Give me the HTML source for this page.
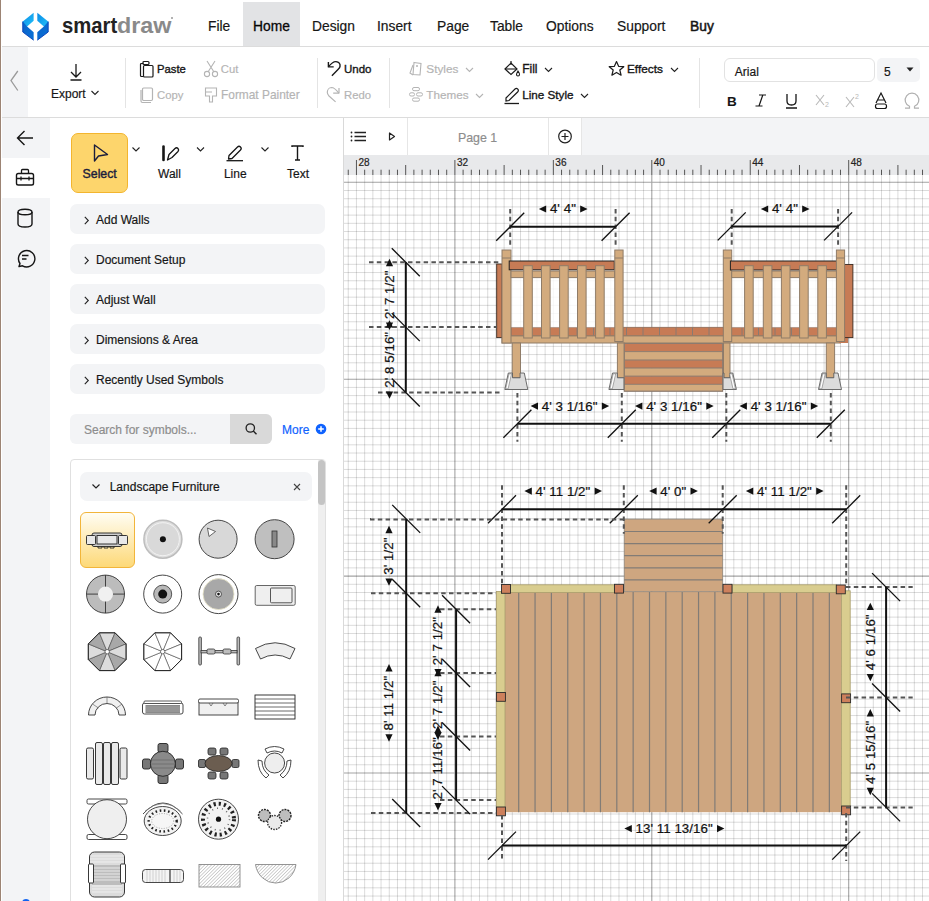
<!DOCTYPE html><html><head><meta charset="utf-8"><style>
*{box-sizing:border-box}
html,body{margin:0;padding:0}
body{width:929px;height:901px;overflow:hidden;position:relative;background:#fff;font-family:"Liberation Sans",sans-serif;color:#161616}
.a{position:absolute}
.t{position:absolute;white-space:nowrap;line-height:1}
svg{position:absolute;overflow:visible}
</style></head><body>
<div class="a" style="left:0px;top:0px;width:1px;height:901px;background:#9c8474"></div>
<div class="a" style="left:1.5px;top:46px;width:929px;height:1px;background:#dcdcdc"></div>
<svg style="left:0;top:0" width="60" height="46" viewBox="0 0 60 46">
<defs>
<linearGradient id="lgU" x1="0" y1="0" x2="1" y2="1"><stop offset="0" stop-color="#0a8ae6"/><stop offset="1" stop-color="#22c0f8"/></linearGradient>
<linearGradient id="lgD" x1="0" y1="0" x2="1" y2="1"><stop offset="0" stop-color="#0a62c8"/><stop offset="1" stop-color="#0a72d8"/></linearGradient>
</defs>
<polygon points="33.65,12.85 22.75,21.6 22.75,24.5 27.1,26.4 33.65,20.8" fill="url(#lgU)"/>
<polygon points="22.75,21.6 22.75,32 33.65,40.2 33.65,32.2 27.1,26.4" fill="url(#lgD)"/>
<polygon points="37.3,12.85 48.2,21.6 48.2,24.5 43.85,26.4 37.3,20.8" fill="url(#lgU)"/>
<polygon points="48.2,21.6 48.2,32 37.3,40.2 37.3,32.2 43.85,26.4" fill="url(#lgD)"/>
<polyline points="33.65,40.2 22.75,32 22.75,21.6" fill="none" stroke="#0740b8" stroke-width="0.9"/>
<polyline points="37.3,40.2 48.2,32 48.2,21.6" fill="none" stroke="#0740b8" stroke-width="0.9"/>
</svg>
<div class="a" style="left:170.5px;top:17px;width:2px;height:2px;background:#999;border-radius:1px"></div>
<div class="a" style="left:243px;top:2px;width:57px;height:44px;background:#e2e3e5"></div>
<div class="a" style="left:1.5px;top:47px;width:26px;height:70px;background:#f3f4f6"></div>
<svg style="left:0;top:47" width="30" height="70"><polyline points="17.8,24 11,33.5 17.8,43.5" fill="none" stroke="#9a9a9a" stroke-width="1.3"/></svg>
<div class="a" style="left:1.5px;top:117px;width:929px;height:1px;background:#dcdcdc"></div>
<svg style="left:66px;top:60px" width="20" height="22"><path d="M10 4 V17 M5 12 L10 17 L15 12 M4.5 20 H15.5" fill="none" stroke="#1a1a1a" stroke-width="1.3"/></svg>
<svg style="left:90px;top:89px" width="10" height="8"><polyline points="1.5,2 5,5.5 8.5,2" fill="none" stroke="#222" stroke-width="1.1"/></svg>
<div class="a" style="left:124.7px;top:57.5px;width:1px;height:50px;background:#e4e4e4"></div>
<div class="a" style="left:316.5px;top:57.5px;width:1px;height:50px;background:#e4e4e4"></div>
<div class="a" style="left:388.6px;top:57.5px;width:1px;height:50px;background:#e4e4e4"></div>
<div class="a" style="left:698.6px;top:57.5px;width:1px;height:50px;background:#e4e4e4"></div>
<svg style="left:138px;top:59px" width="18" height="20"><path d="M5.5 4.5 H3.5 Q2.5 4.5 2.5 5.5 V16.5 Q2.5 17.5 3.5 17.5 H5" fill="none" stroke="#1a1a1a" stroke-width="1.2"/><rect x="5.5" y="6.5" width="9.5" height="11.5" rx="1" fill="none" stroke="#1a1a1a" stroke-width="1.2"/><rect x="5" y="2.5" width="6" height="3" rx="1" fill="none" stroke="#1a1a1a" stroke-width="1.2"/></svg>
<svg style="left:203px;top:59px" width="16" height="20"><path d="M4 2 L11 13 M12 2 L5 13" stroke="#b4b4b4" stroke-width="1.1" fill="none"/><circle cx="4" cy="15" r="2.6" fill="none" stroke="#b4b4b4" stroke-width="1.1"/><circle cx="12" cy="15" r="2.6" fill="none" stroke="#b4b4b4" stroke-width="1.1"/></svg>
<svg style="left:138px;top:85px" width="18" height="20"><rect x="4.5" y="3" width="10" height="12.5" rx="1.2" fill="none" stroke="#b4b4b4" stroke-width="1.2"/><path d="M3 5 V16 Q3 17.5 4.5 17.5 H13" fill="none" stroke="#b4b4b4" stroke-width="1.2"/></svg>
<svg style="left:203px;top:85px" width="16" height="20"><path d="M2.5 3 H13.5 V11 H9.5 V17 H6.5 V11 H2.5 Z M2.5 7 H9" fill="none" stroke="#b4b4b4" stroke-width="1.1"/></svg>
<svg style="left:326px;top:59px" width="18" height="20"><path d="M2.4 2.9 V7.9 H7.7" fill="none" stroke="#1a1a1a" stroke-width="1.4" stroke-linejoin="round"/><path d="M2.4 7.9 C5 4.5 8 2.5 10 2.6 C13 2.8 14.5 5 14 7.5 C13.7 9 12.5 10 12 10.5 L5.9 16.7" fill="none" stroke="#1a1a1a" stroke-width="1.4"/></svg>
<svg style="left:326px;top:85px" width="18" height="20"><path d="M13 3 V8.1 H7.2" fill="none" stroke="#b4b4b4" stroke-width="1.2" stroke-linejoin="round"/><path d="M12.8 8.1 C10 4.5 7.5 2.5 5.6 2.5 C3 2.6 1.3 5 1.3 7.3 C1.3 9 2 10 3 11 L9.6 16.9" fill="none" stroke="#b4b4b4" stroke-width="1.2"/></svg>
<svg style="left:408px;top:59px" width="16" height="20"><path d="M6 3.5 L13 4.5 L12 16 L5 15.5 Z" fill="none" stroke="#b4b4b4" stroke-width="1.1"/><path d="M5 6 L2 14 L5 16" fill="none" stroke="#b4b4b4" stroke-width="1.1"/><circle cx="9" cy="7" r="1" fill="#b4b4b4"/></svg>
<svg style="left:465px;top:66px" width="10" height="8"><polyline points="1,2 4.5,5.5 8,2" fill="none" stroke="#b4b4b4" stroke-width="1.1"/></svg>
<svg style="left:408px;top:85px" width="16" height="20"><rect x="4.5" y="2.5" width="7" height="3.2" rx="1.5" fill="none" stroke="#b4b4b4" stroke-width="1"/><rect x="1.5" y="7.8" width="5" height="3.2" rx="1.5" fill="none" stroke="#b4b4b4" stroke-width="1"/><rect x="8.5" y="7.8" width="6" height="3.2" rx="1.5" fill="none" stroke="#b4b4b4" stroke-width="1"/><rect x="4.5" y="13" width="7" height="3.2" rx="1.5" fill="none" stroke="#b4b4b4" stroke-width="1"/></svg>
<svg style="left:475px;top:92px" width="10" height="8"><polyline points="1,2 4.5,5.5 8,2" fill="none" stroke="#b4b4b4" stroke-width="1.1"/></svg>
<svg style="left:503px;top:59px" width="18" height="20"><path d="M2 10 L8 4 L14 10 L8 15.5 Z" fill="none" stroke="#1a1a1a" stroke-width="1.2"/><path d="M8 2 V6" stroke="#1a1a1a" stroke-width="1.2"/><path d="M2.5 10 H14" stroke="#1a1a1a" stroke-width="1.1"/><path d="M15 12 Q16.8 14.5 16.5 15.5 A1.5 1.5 0 0 1 13.5 15.5 Q13.5 14.5 15 12Z" fill="none" stroke="#1a1a1a" stroke-width="1.1"/></svg>
<svg style="left:544px;top:66px" width="10" height="8"><polyline points="1,2 4.5,5.5 8,2" fill="none" stroke="#222" stroke-width="1.1"/></svg>
<svg style="left:503px;top:85px" width="18" height="20"><path d="M3 13 L12 4 Q13.5 2.8 14.8 4.2 Q16 5.5 14.6 7 L6 15.5 L3 16 Z" fill="none" stroke="#1a1a1a" stroke-width="1.2"/><path d="M1.5 18.5 H16" stroke="#1a1a1a" stroke-width="1.3"/></svg>
<svg style="left:580px;top:92px" width="10" height="8"><polyline points="1,2 4.5,5.5 8,2" fill="none" stroke="#222" stroke-width="1.1"/></svg>
<svg style="left:608px;top:59px" width="18" height="20"><path d="M8.5 2.5 L10.6 7.3 L15.8 7.7 L11.8 11 L13.1 16.2 L8.5 13.4 L3.9 16.2 L5.2 11 L1.2 7.7 L6.4 7.3 Z" fill="none" stroke="#1a1a1a" stroke-width="1.2" stroke-linejoin="round"/></svg>
<svg style="left:670px;top:66px" width="10" height="8"><polyline points="1,2 4.5,5.5 8,2" fill="none" stroke="#222" stroke-width="1.1"/></svg>
<div class="a" style="left:723.7px;top:58.3px;width:151px;height:24.2px;border:1px solid #e2e2e2;border-radius:6px;background:#fff"></div>
<div class="a" style="left:877.4px;top:58.3px;width:42.4px;height:24.2px;background:#f3f4f6;border-radius:5px"></div>
<svg style="left:904px;top:66px" width="12" height="8"><polygon points="2.5,1.5 9.5,1.5 6,5.5" fill="#222"/></svg>
<svg style="left:720px;top:90px" width="209" height="22">
<text x="7" y="16" font-family="Liberation Sans" font-weight="bold" font-size="13.5" fill="#161616">B</text>
<path d="M39 5 H46 M35.5 16 H42.5 M42.8 5 L39 16" stroke="#161616" stroke-width="1.2" fill="none"/>
<path d="M67 4 V11 Q67 15 71.5 15 Q76 15 76 11 V4 M66 18 H77" stroke="#161616" stroke-width="1.3" fill="none"/>
<path d="M96 5 L104 15 M104 5 L96 15" stroke="#b8b8b8" stroke-width="1.1" fill="none"/><text x="105" y="17" font-family="Liberation Sans" font-size="7" fill="#b8b8b8">2</text>
<path d="M126 7 L134 17 M134 7 L126 17" stroke="#b8b8b8" stroke-width="1.1" fill="none"/><text x="135" y="9" font-family="Liberation Sans" font-size="7" fill="#b8b8b8">2</text>
<path d="M156 13 L161 3 L166 13 M158 10 H164" stroke="#161616" stroke-width="1.2" fill="none"/><rect x="155.5" y="14" width="11" height="4.5" rx="2" fill="none" stroke="#161616" stroke-width="1.2"/>
<path d="M185 18.2 H189.5 V16.3 A6.8 6.8 0 1 1 194.5 16.3 V18.2 H199" stroke="#b0b0b0" stroke-width="1.2" fill="none"/>
</svg>
<div class="a" style="left:1.5px;top:118px;width:48.5px;height:783px;background:#f3f4f6"></div>
<div class="a" style="left:1.5px;top:158px;width:48.5px;height:40px;background:#fff"></div>
<svg style="left:0;top:118px" width="50" height="160">
<path d="M33 20 H17.5 M24.5 13 L17.5 20 L24.5 27" fill="none" stroke="#161616" stroke-width="1.4"/>
<rect x="16.5" y="55.5" width="17" height="11.5" rx="1.8" fill="none" stroke="#161616" stroke-width="1.4"/>
<path d="M21.5 55.5 V52.5 Q21.5 51.5 22.5 51.5 H27.5 Q28.5 51.5 28.5 52.5 V55.5 M16.5 60.5 H33.5 M21 58.5 V62.5 M29 58.5 V62.5" fill="none" stroke="#161616" stroke-width="1.3"/>
<ellipse cx="25" cy="94" rx="7" ry="2.8" fill="none" stroke="#161616" stroke-width="1.4"/>
<path d="M18 94 V106 Q18 109 25 109 Q32 109 32 106 V94" fill="none" stroke="#161616" stroke-width="1.4"/>
<path d="M19 148.5 L20 145.5 A8.2 8.2 0 1 1 22.5 147.8 Z" fill="none" stroke="#161616" stroke-width="1.4" stroke-linejoin="round"/>
<path d="M22 137.5 H28.5 M22 141 H26.5" stroke="#161616" stroke-width="1.4"/>
</svg>
<div class="a" style="left:343px;top:118px;width:1px;height:783px;background:#d9d9d9"></div>
<div class="a" style="left:70.5px;top:133px;width:57.3px;height:59.6px;background:#fdd56c;border:1px solid #f3b52e;border-radius:7px"></div>
<svg style="left:60px;top:120px" width="280" height="50">
<path d="M34.5 25 L34.5 41 L38.5 36 L47.5 34.5 Z" fill="none" stroke="#1b1d3c" stroke-width="1.4" stroke-linejoin="round"/>
<polyline points="72.5,27.5 76,31 79.5,27.5" fill="none" stroke="#222" stroke-width="1.1"/>
<path d="M103.5 26.5 V40" stroke="#161616" stroke-width="2.6" stroke-linecap="round"/>
<path d="M107.5 40 L109 34.5 L115 28.5 Q116.6 27 118 28.5 Q119.3 30 118 31.5 L112 37.5 Z" fill="none" stroke="#161616" stroke-width="1.3" stroke-linejoin="round"/>
<polyline points="137,27.5 140.5,31 144,27.5" fill="none" stroke="#222" stroke-width="1.1"/>
<path d="M169 35.5 L177.5 27 Q179 25.5 180.5 27 Q182 28.5 180.5 30 L172 38.5 L168.5 39 Z" fill="none" stroke="#161616" stroke-width="1.3" stroke-linejoin="round"/>
<path d="M166.5 40.7 H183" stroke="#161616" stroke-width="1.3"/>
<polyline points="201.5,27.5 205,31 208.5,27.5" fill="none" stroke="#222" stroke-width="1.1"/>
<path d="M232 27 V26 H243 V27 M237.5 26 V40 M235 40 H240" stroke="#161616" stroke-width="1.4" fill="none"/>
</svg>
<div class="a" style="left:70px;top:204px;width:255.2px;height:29.6px;background:#f3f4f6;border-radius:7px"></div>
<svg style="left:80px;top:204px" width="12" height="30"><polyline points="4.8,12.8 8.3,16.5 4.8,20.2" fill="none" stroke="#222" stroke-width="1.1"/></svg>
<div class="a" style="left:70px;top:244px;width:255.2px;height:29.6px;background:#f3f4f6;border-radius:7px"></div>
<svg style="left:80px;top:244px" width="12" height="30"><polyline points="4.8,12.8 8.3,16.5 4.8,20.2" fill="none" stroke="#222" stroke-width="1.1"/></svg>
<div class="a" style="left:70px;top:284px;width:255.2px;height:29.6px;background:#f3f4f6;border-radius:7px"></div>
<svg style="left:80px;top:284px" width="12" height="30"><polyline points="4.8,12.8 8.3,16.5 4.8,20.2" fill="none" stroke="#222" stroke-width="1.1"/></svg>
<div class="a" style="left:70px;top:324px;width:255.2px;height:29.6px;background:#f3f4f6;border-radius:7px"></div>
<svg style="left:80px;top:324px" width="12" height="30"><polyline points="4.8,12.8 8.3,16.5 4.8,20.2" fill="none" stroke="#222" stroke-width="1.1"/></svg>
<div class="a" style="left:70px;top:364px;width:255.2px;height:29.6px;background:#f3f4f6;border-radius:7px"></div>
<svg style="left:80px;top:364px" width="12" height="30"><polyline points="4.8,12.8 8.3,16.5 4.8,20.2" fill="none" stroke="#222" stroke-width="1.1"/></svg>
<div class="a" style="left:70px;top:414.2px;width:202px;height:29.5px;background:#f3f4f6;border-radius:6px"></div>
<div class="a" style="left:230.3px;top:414.2px;width:41.7px;height:29.5px;background:#d9d9d9;border-radius:0 6px 6px 0"></div>
<svg style="left:241px;top:419px" width="20" height="20"><circle cx="9.3" cy="9" r="4.2" fill="none" stroke="#222" stroke-width="1.3"/><path d="M12.3 12 L15.5 15.2" stroke="#222" stroke-width="1.4"/></svg>
<svg style="left:313px;top:421px" width="16" height="16"><circle cx="8" cy="8" r="5.3" fill="#0f62fe"/><path d="M8 5.2 V10.8 M5.2 8 H10.8" stroke="#fff" stroke-width="1.5"/></svg>
<div class="a" style="left:70px;top:459.4px;width:256px;height:460px;border:1px solid #e0e0e0;border-radius:4px"></div>
<div class="a" style="left:317.7px;top:460px;width:7.2px;height:441px;background:#efefef"></div>
<div class="a" style="left:317.7px;top:460px;width:7.2px;height:45px;background:#c4c4c4;border-radius:4px"></div>
<div class="a" style="left:80px;top:472.2px;width:232.2px;height:29.3px;background:#f3f4f6;border-radius:7px"></div>
<svg style="left:88px;top:478px" width="16" height="16"><polyline points="4.5,6.5 8,10 11.5,6.5" fill="none" stroke="#222" stroke-width="1.2"/></svg>
<svg style="left:291px;top:481px" width="12" height="12"><path d="M3 3 L9 9 M9 3 L3 9" stroke="#444" stroke-width="1.1"/></svg>
<div class="a" style="left:344px;top:118px;width:585px;height:37px;background:#f3f4f6"></div>
<div class="a" style="left:344px;top:118px;width:236.5px;height:37px;background:#fff"></div>
<div class="a" style="left:407px;top:118px;width:1px;height:37px;background:#e6e6e6"></div>
<div class="a" style="left:548.3px;top:118px;width:1px;height:37px;background:#e6e6e6"></div>
<div class="a" style="left:580.5px;top:118px;width:1px;height:37px;background:#e6e6e6"></div>
<svg style="left:344px;top:118px" width="240" height="37">
<path d="M10.5 14.5 H22 M10.5 18.5 H22 M10.5 22.5 H22" stroke="#222" stroke-width="1.3"/>
<circle cx="7.5" cy="14.5" r="0.9" fill="#222"/><circle cx="7.5" cy="18.5" r="0.9" fill="#222"/><circle cx="7.5" cy="22.5" r="0.9" fill="#222"/>
<path d="M45.5 15 L45.5 22 L50.5 18.5 Z" fill="none" stroke="#222" stroke-width="1.2" stroke-linejoin="round"/>
<circle cx="221" cy="18.5" r="6.3" fill="none" stroke="#222" stroke-width="1.2"/>
<path d="M221 15 V22 M217.5 18.5 H224.5" stroke="#222" stroke-width="1.2"/>
</svg>
<svg style="left:344px;top:155px" width="585" height="746" viewBox="344 155 585 746"><rect x="344" y="155" width="585" height="20" fill="#e8e9eb"/><rect x="344" y="175" width="585" height="726" fill="#fff"/><path d="M348.25 175V901 M356.45 175V901 M364.66 175V901 M372.86 175V901 M381.06 175V901 M389.27 175V901 M397.47 175V901 M405.68 175V901 M413.88 175V901 M422.08 175V901 M430.29 175V901 M438.49 175V901 M446.70 175V901 M463.10 175V901 M471.31 175V901 M479.51 175V901 M487.72 175V901 M495.92 175V901 M504.12 175V901 M512.33 175V901 M520.53 175V901 M528.74 175V901 M536.94 175V901 M545.14 175V901 M553.35 175V901 M561.55 175V901 M569.76 175V901 M577.96 175V901 M586.16 175V901 M594.37 175V901 M602.57 175V901 M610.78 175V901 M618.98 175V901 M627.18 175V901 M635.39 175V901 M643.59 175V901 M660.00 175V901 M668.20 175V901 M676.41 175V901 M684.61 175V901 M692.82 175V901 M701.02 175V901 M709.22 175V901 M717.43 175V901 M725.63 175V901 M733.84 175V901 M742.04 175V901 M750.24 175V901 M758.45 175V901 M766.65 175V901 M774.86 175V901 M783.06 175V901 M791.26 175V901 M799.47 175V901 M807.67 175V901 M815.88 175V901 M824.08 175V901 M832.28 175V901 M840.49 175V901 M856.90 175V901 M865.10 175V901 M873.30 175V901 M881.51 175V901 M889.71 175V901 M897.92 175V901 M906.12 175V901 M914.32 175V901 M922.53 175V901 M344 190.50H929 M344 198.71H929 M344 206.91H929 M344 215.12H929 M344 223.32H929 M344 231.52H929 M344 239.73H929 M344 247.93H929 M344 256.14H929 M344 264.34H929 M344 272.54H929 M344 280.75H929 M344 288.95H929 M344 297.16H929 M344 305.36H929 M344 313.56H929 M344 321.77H929 M344 329.97H929 M344 338.18H929 M344 346.38H929 M344 354.58H929 M344 362.79H929 M344 370.99H929 M344 387.40H929 M344 395.60H929 M344 403.81H929 M344 412.01H929 M344 420.22H929 M344 428.42H929 M344 436.62H929 M344 444.83H929 M344 453.03H929 M344 461.24H929 M344 469.44H929 M344 477.64H929 M344 485.85H929 M344 494.05H929 M344 502.26H929 M344 510.46H929 M344 518.66H929 M344 526.87H929 M344 535.07H929 M344 543.28H929 M344 551.48H929 M344 559.68H929 M344 567.89H929 M344 584.30H929 M344 592.50H929 M344 600.70H929 M344 608.91H929 M344 617.11H929 M344 625.32H929 M344 633.52H929 M344 641.72H929 M344 649.93H929 M344 658.13H929 M344 666.34H929 M344 674.54H929 M344 682.74H929 M344 690.95H929 M344 699.15H929 M344 707.36H929 M344 715.56H929 M344 723.76H929 M344 731.97H929 M344 740.17H929 M344 748.38H929 M344 756.58H929 M344 764.78H929 M344 781.19H929 M344 789.40H929 M344 797.60H929 M344 805.80H929 M344 814.01H929 M344 822.21H929 M344 830.42H929 M344 838.62H929 M344 846.82H929 M344 855.03H929 M344 863.23H929 M344 871.44H929 M344 879.64H929 M344 887.84H929 M344 896.05H929" stroke="rgba(0,0,0,0.14)" stroke-width="1" fill="none"/><path d="M454.90 175V901 M651.80 175V901 M848.69 175V901 M344 182.30H929 M344 379.20H929 M344 576.09H929 M344 772.99H929" stroke="rgba(0,0,0,0.36)" stroke-width="1.1" fill="none"/><path d="M348.25 169.7V175 M356.45 160V175 M364.66 169.7V175 M372.86 169.7V175 M381.06 169.7V175 M389.27 169.7V175 M397.47 169.7V175 M405.68 165V175 M413.88 169.7V175 M422.08 169.7V175 M430.29 169.7V175 M438.49 169.7V175 M446.70 169.7V175 M454.90 160V175 M463.10 169.7V175 M471.31 169.7V175 M479.51 169.7V175 M487.72 169.7V175 M495.92 169.7V175 M504.12 165V175 M512.33 169.7V175 M520.53 169.7V175 M528.74 169.7V175 M536.94 169.7V175 M545.14 169.7V175 M553.35 160V175 M561.55 169.7V175 M569.76 169.7V175 M577.96 169.7V175 M586.16 169.7V175 M594.37 169.7V175 M602.57 165V175 M610.78 169.7V175 M618.98 169.7V175 M627.18 169.7V175 M635.39 169.7V175 M643.59 169.7V175 M651.80 160V175 M660.00 169.7V175 M668.20 169.7V175 M676.41 169.7V175 M684.61 169.7V175 M692.82 169.7V175 M701.02 165V175 M709.22 169.7V175 M717.43 169.7V175 M725.63 169.7V175 M733.84 169.7V175 M742.04 169.7V175 M750.24 160V175 M758.45 169.7V175 M766.65 169.7V175 M774.86 169.7V175 M783.06 169.7V175 M791.26 169.7V175 M799.47 165V175 M807.67 169.7V175 M815.88 169.7V175 M824.08 169.7V175 M832.28 169.7V175 M840.49 169.7V175 M848.69 160V175 M856.90 169.7V175 M865.10 169.7V175 M873.30 169.7V175 M881.51 169.7V175 M889.71 169.7V175 M897.92 165V175 M906.12 169.7V175 M914.32 169.7V175 M922.53 169.7V175" stroke="#555" stroke-width="1" fill="none"/><text x="358.45" y="165.8" font-family="Liberation Sans" font-size="10" fill="#222" stroke="#222" stroke-width="0.2">28</text><text x="456.90" y="165.8" font-family="Liberation Sans" font-size="10" fill="#222" stroke="#222" stroke-width="0.2">32</text><text x="555.35" y="165.8" font-family="Liberation Sans" font-size="10" fill="#222" stroke="#222" stroke-width="0.2">36</text><text x="653.80" y="165.8" font-family="Liberation Sans" font-size="10" fill="#222" stroke="#222" stroke-width="0.2">40</text><text x="752.24" y="165.8" font-family="Liberation Sans" font-size="10" fill="#222" stroke="#222" stroke-width="0.2">44</text><text x="850.69" y="165.8" font-family="Liberation Sans" font-size="10" fill="#222" stroke="#222" stroke-width="0.2">48</text><rect x="511.00" y="327.30" width="329.50" height="8.60" fill="#c77b55" stroke="#8a6a58" stroke-width="0.8"/><path d="M527.5 327.5V335.7 M544.0 327.5V335.7 M560.5 327.5V335.7 M577.0 327.5V335.7 M593.5 327.5V335.7 M610.0 327.5V335.7 M626.5 327.5V335.7 M643.0 327.5V335.7 M659.5 327.5V335.7 M676.0 327.5V335.7 M692.5 327.5V335.7 M709.0 327.5V335.7 M725.5 327.5V335.7 M742.0 327.5V335.7 M758.5 327.5V335.7 M775.0 327.5V335.7 M791.5 327.5V335.7 M808.0 327.5V335.7 M824.5 327.5V335.7" stroke="#8a7a70" stroke-width="1"/><rect x="502.00" y="335.90" width="338.50" height="7.10" fill="#d3ab7e" stroke="#8f7c68" stroke-width="1"/><rect x="839.00" y="337.00" width="9.00" height="6.00" fill="#c77b55" stroke="none" stroke-width="1"/><rect x="624.20" y="343.60" width="98.50" height="8.10" fill="#c77b55" stroke="#8a7a6e" stroke-width="0.8"/><rect x="624.20" y="351.70" width="98.50" height="8.40" fill="#d3ab7e" stroke="#8a7a6e" stroke-width="0.8"/><rect x="624.20" y="360.10" width="98.50" height="8.00" fill="#c77b55" stroke="#8a7a6e" stroke-width="0.8"/><rect x="624.20" y="368.10" width="98.50" height="8.10" fill="#d3ab7e" stroke="#8a7a6e" stroke-width="0.8"/><rect x="624.20" y="376.20" width="98.50" height="8.10" fill="#c77b55" stroke="#8a7a6e" stroke-width="0.8"/><rect x="624.20" y="384.30" width="98.50" height="6.90" fill="#d3ab7e" stroke="#8a7a6e" stroke-width="0.8"/><rect x="511.00" y="270.00" width="103.80" height="57.30" fill="rgba(255,255,255,0.8)" stroke="none" stroke-width="1"/><rect x="731.70" y="270.00" width="104.70" height="57.30" fill="rgba(255,255,255,0.8)" stroke="none" stroke-width="1"/><rect x="496.70" y="264.00" width="5.40" height="73.60" fill="#c77b55" stroke="#3a2a20" stroke-width="0.9"/><rect x="502.00" y="250.00" width="9.00" height="93.00" fill="#d3ab7e" stroke="#8f7c68" stroke-width="1"/><path d="M502 258H511" stroke="#8f7c68" stroke-width="1"/><rect x="509.20" y="261.00" width="105.10" height="8.80" fill="#c77b55" stroke="#222" stroke-width="1"/><rect x="511.00" y="271.00" width="103.50" height="6.60" fill="#d3ab7e" stroke="#8f7c68" stroke-width="1"/><rect x="523.70" y="265.70" width="8.60" height="72.30" fill="#d3ab7e" stroke="#8f7c68" stroke-width="1"/><rect x="541.50" y="265.70" width="8.60" height="72.30" fill="#d3ab7e" stroke="#8f7c68" stroke-width="1"/><rect x="559.60" y="265.70" width="8.60" height="72.30" fill="#d3ab7e" stroke="#8f7c68" stroke-width="1"/><rect x="577.50" y="265.70" width="8.60" height="72.30" fill="#d3ab7e" stroke="#8f7c68" stroke-width="1"/><rect x="595.60" y="265.70" width="8.60" height="72.30" fill="#d3ab7e" stroke="#8f7c68" stroke-width="1"/><rect x="614.80" y="250.00" width="8.30" height="91.50" fill="#d3ab7e" stroke="#8f7c68" stroke-width="1"/><path d="M614.8 258H623.1" stroke="#8f7c68" stroke-width="1"/><rect x="843.50" y="264.50" width="9.40" height="73.10" fill="#c77b55" stroke="#3a2a20" stroke-width="0.9"/><rect x="723.30" y="250.00" width="8.40" height="91.50" fill="#d3ab7e" stroke="#8f7c68" stroke-width="1"/><path d="M723.3 258H731.7" stroke="#8f7c68" stroke-width="1"/><rect x="730.40" y="261.00" width="107.10" height="9.00" fill="#c77b55" stroke="#222" stroke-width="1"/><rect x="731.70" y="271.00" width="105.30" height="6.60" fill="#d3ab7e" stroke="#8f7c68" stroke-width="1"/><rect x="744.60" y="265.70" width="8.60" height="72.30" fill="#d3ab7e" stroke="#8f7c68" stroke-width="1"/><rect x="763.30" y="265.70" width="8.60" height="72.30" fill="#d3ab7e" stroke="#8f7c68" stroke-width="1"/><rect x="781.40" y="265.70" width="8.60" height="72.30" fill="#d3ab7e" stroke="#8f7c68" stroke-width="1"/><rect x="799.60" y="265.70" width="8.60" height="72.30" fill="#d3ab7e" stroke="#8f7c68" stroke-width="1"/><rect x="817.80" y="265.70" width="8.60" height="72.30" fill="#d3ab7e" stroke="#8f7c68" stroke-width="1"/><rect x="836.40" y="250.00" width="8.20" height="91.50" fill="#d3ab7e" stroke="#8f7c68" stroke-width="1"/><path d="M836.4 258H844.6" stroke="#8f7c68" stroke-width="1"/><rect x="512.20" y="343.00" width="8.30" height="34.50" fill="#d3ab7e" stroke="#8f7c68" stroke-width="1"/><rect x="617.40" y="343.00" width="6.80" height="34.50" fill="#d3ab7e" stroke="#8f7c68" stroke-width="1"/><rect x="723.50" y="343.00" width="6.50" height="34.50" fill="#d3ab7e" stroke="#8f7c68" stroke-width="1"/><rect x="826.30" y="343.00" width="8.30" height="34.50" fill="#d3ab7e" stroke="#8f7c68" stroke-width="1"/><path d="M508.3 373 H512.5 V377.8 H520.1 V373 H524.3 L527.8 389.5 H504.8 Z" fill="#dcdcdc" stroke="#5e5e5e" stroke-width="0.9"/><path d="M509.0 373.8 H511.5 L508.1 388.8 H505.7 Z" fill="#fff" stroke="#777" stroke-width="0.6"/><path d="M822.0 373 H826.2 V377.8 H833.8 V373 H838.0 L841.5 389.5 H818.5 Z" fill="#dcdcdc" stroke="#5e5e5e" stroke-width="0.9"/><path d="M822.7 373.8 H825.2 L821.8 388.8 H819.4 Z" fill="#fff" stroke="#777" stroke-width="0.6"/><path d="M612.5 373 H617.4 V377.8 H624 V389.5 H608.9 Z" fill="#dcdcdc" stroke="#5e5e5e" stroke-width="0.9"/><path d="M613.2 373.8 H615.7 L612.3 388.8 H609.9 Z" fill="#fff" stroke="#777" stroke-width="0.6"/><path d="M723 373 V389.5 H736.4 L732.8 373 H730 V377.8 H724 V373 Z" fill="#dcdcdc" stroke="#5e5e5e" stroke-width="0.9"/><path d="M729.6 373.8 H732.1 L735.4 388.8 H733 Z" fill="#fff" stroke="#777" stroke-width="0.6"/><rect x="624.20" y="343.60" width="98.50" height="47.60" fill="none" stroke="#8a7a6e" stroke-width="0.8"/><rect x="505.00" y="592.00" width="336.60" height="220.20" fill="#cea680" stroke="none" stroke-width="1"/><path d="M518.70 592V812.2 M535.05 592V812.2 M551.40 592V812.2 M567.75 592V812.2 M584.10 592V812.2 M600.45 592V812.2 M616.80 592V812.2 M633.15 592V812.2 M649.50 592V812.2 M665.85 592V812.2 M682.20 592V812.2 M698.55 592V812.2 M714.90 592V812.2 M731.25 592V812.2 M747.60 592V812.2 M763.95 592V812.2 M780.30 592V812.2 M796.65 592V812.2 M813.00 592V812.2 M829.35 592V812.2" stroke="#827c76" stroke-width="1.2"/><rect x="624.20" y="519.10" width="98.50" height="72.60" fill="#cea680" stroke="#8c847a" stroke-width="0.8"/><path d="M624.2 531.5H722.7 M624.2 543.6H722.7 M624.2 555.7H722.7 M624.2 567.8H722.7 M624.2 579.9H722.7" stroke="#827c76" stroke-width="1.2"/><rect x="496.40" y="591.40" width="8.60" height="220.60" fill="#d9cd8f" stroke="#a99d6c" stroke-width="0.8"/><rect x="505.00" y="584.80" width="109.30" height="7.80" fill="#d9cd8f" stroke="#a99d6c" stroke-width="0.8"/><rect x="732.20" y="584.80" width="104.10" height="7.80" fill="#d9cd8f" stroke="#a99d6c" stroke-width="0.8"/><rect x="841.60" y="590.80" width="8.60" height="217.20" fill="#d9cd8f" stroke="#a99d6c" stroke-width="0.8"/><rect x="501.50" y="584.50" width="9.00" height="8.80" fill="#cd805c" stroke="#2a2a2a" stroke-width="0.9"/><rect x="614.50" y="584.30" width="9.00" height="8.80" fill="#cd805c" stroke="#2a2a2a" stroke-width="0.9"/><rect x="723.00" y="584.30" width="9.00" height="8.80" fill="#cd805c" stroke="#2a2a2a" stroke-width="0.9"/><rect x="836.30" y="585.00" width="9.00" height="8.80" fill="#cd805c" stroke="#2a2a2a" stroke-width="0.9"/><rect x="841.60" y="693.90" width="9.00" height="8.80" fill="#cd805c" stroke="#2a2a2a" stroke-width="0.9"/><rect x="496.40" y="692.50" width="9.00" height="8.80" fill="#cd805c" stroke="#2a2a2a" stroke-width="0.9"/><rect x="496.40" y="807.00" width="9.00" height="8.80" fill="#cd805c" stroke="#2a2a2a" stroke-width="0.9"/><rect x="841.60" y="806.00" width="9.00" height="8.80" fill="#cd805c" stroke="#2a2a2a" stroke-width="0.9"/><path d="M510.2 209.0V245.7" stroke="#555" stroke-width="2" stroke-dasharray="4.5 3.3"/><path d="M615.6 209.0V245.7" stroke="#555" stroke-width="2" stroke-dasharray="4.5 3.3"/><path d="M510.2 226.8H615.6" stroke="#111" stroke-width="2"/><path d="M496.2 240.8L524.2 212.8" stroke="#111" stroke-width="1.3"/><path d="M601.6 240.8L629.6 212.8" stroke="#111" stroke-width="1.3"/><text transform="translate(549.92 213.40) scale(1.09 1)" font-family="Liberation Sans" font-size="12.2" letter-spacing="0.05" fill="#111" stroke="#111" stroke-width="0.2">4' 4&quot;</text><path d="M538.8 209.0L546.2 205.4V212.6Z" fill="#111"/><path d="M587.6 209.0L580.2 205.4V212.6Z" fill="#111"/><path d="M731.7 209.0V245.7" stroke="#555" stroke-width="2" stroke-dasharray="4.5 3.3"/><path d="M838.1 209.0V245.7" stroke="#555" stroke-width="2" stroke-dasharray="4.5 3.3"/><path d="M731.7 226.4H838.1" stroke="#111" stroke-width="2"/><path d="M717.7 240.4L745.7 212.4" stroke="#111" stroke-width="1.3"/><path d="M824.1 240.4L852.1 212.4" stroke="#111" stroke-width="1.3"/><text transform="translate(771.92 213.40) scale(1.09 1)" font-family="Liberation Sans" font-size="12.2" letter-spacing="0.05" fill="#111" stroke="#111" stroke-width="0.2">4' 4&quot;</text><path d="M760.8 209.0L768.2 205.4V212.6Z" fill="#111"/><path d="M809.6 209.0L802.2 205.4V212.6Z" fill="#111"/><path d="M369.0 262.3H501.6" stroke="#555" stroke-width="2" stroke-dasharray="4.5 3.3"/><path d="M369.0 327.1H497.0" stroke="#555" stroke-width="2" stroke-dasharray="4.5 3.3"/><path d="M378.0 392.5H501.6" stroke="#555" stroke-width="2" stroke-dasharray="4.5 3.3"/><path d="M405.8 262.3V392.5" stroke="#111" stroke-width="2"/><path d="M391.8 248.3L419.8 276.3" stroke="#111" stroke-width="1.3"/><path d="M391.8 313.1L419.8 341.1" stroke="#111" stroke-width="1.3"/><path d="M391.8 378.5L419.8 406.5" stroke="#111" stroke-width="1.3"/><text transform="translate(393.90 318.88) rotate(-90) scale(1.09 1)" font-family="Liberation Sans" font-size="12.2" letter-spacing="0.05" fill="#111" stroke="#111" stroke-width="0.2">2' 7 1/2&quot;</text><path d="M389.5 258.8L385.9 266.2H393.1Z" fill="#111"/><path d="M389.5 330.0L385.9 322.6H393.1Z" fill="#111"/><text transform="translate(393.90 387.70) rotate(-90) scale(1.09 1)" font-family="Liberation Sans" font-size="12.2" letter-spacing="0.05" fill="#111" stroke="#111" stroke-width="0.2">2' 8 5/16&quot;</text><path d="M389.5 320.2L385.9 327.6H393.1Z" fill="#111"/><path d="M389.5 398.8L385.9 391.4H393.1Z" fill="#111"/><path d="M517.4 393.0V441.8" stroke="#555" stroke-width="2" stroke-dasharray="4.5 3.3"/><path d="M621.8 393.0V441.8" stroke="#555" stroke-width="2" stroke-dasharray="4.5 3.3"/><path d="M726.3 393.0V441.8" stroke="#555" stroke-width="2" stroke-dasharray="4.5 3.3"/><path d="M830.8 393.0V441.8" stroke="#555" stroke-width="2" stroke-dasharray="4.5 3.3"/><path d="M517.4 423.8H830.8" stroke="#111" stroke-width="2"/><path d="M503.4 437.8L531.4 409.8" stroke="#111" stroke-width="1.3"/><path d="M607.8 437.8L635.8 409.8" stroke="#111" stroke-width="1.3"/><path d="M712.3 437.8L740.3 409.8" stroke="#111" stroke-width="1.3"/><path d="M816.8 437.8L844.8 409.8" stroke="#111" stroke-width="1.3"/><text transform="translate(541.70 410.50) scale(1.09 1)" font-family="Liberation Sans" font-size="12.2" letter-spacing="0.05" fill="#111" stroke="#111" stroke-width="0.2">4' 3 1/16&quot;</text><path d="M530.6 406.1L538.0 402.5V409.7Z" fill="#111"/><path d="M609.2 406.1L601.8 402.5V409.7Z" fill="#111"/><text transform="translate(646.15 410.50) scale(1.09 1)" font-family="Liberation Sans" font-size="12.2" letter-spacing="0.05" fill="#111" stroke="#111" stroke-width="0.2">4' 3 1/16&quot;</text><path d="M635.0 406.1L642.4 402.5V409.7Z" fill="#111"/><path d="M713.7 406.1L706.3 402.5V409.7Z" fill="#111"/><text transform="translate(750.65 410.50) scale(1.09 1)" font-family="Liberation Sans" font-size="12.2" letter-spacing="0.05" fill="#111" stroke="#111" stroke-width="0.2">4' 3 1/16&quot;</text><path d="M739.5 406.1L746.9 402.5V409.7Z" fill="#111"/><path d="M818.2 406.1L810.8 402.5V409.7Z" fill="#111"/><path d="M502.0 485.2V583.7" stroke="#555" stroke-width="2" stroke-dasharray="4.5 3.3"/><path d="M623.8 485.2V533.7" stroke="#555" stroke-width="2" stroke-dasharray="4.5 3.3"/><path d="M722.7 485.2V533.7" stroke="#555" stroke-width="2" stroke-dasharray="4.5 3.3"/><path d="M846.2 485.2V586.0" stroke="#555" stroke-width="2" stroke-dasharray="4.5 3.3"/><path d="M502.0 509.3H846.2" stroke="#111" stroke-width="2"/><path d="M488.0 523.3L516.0 495.3" stroke="#111" stroke-width="1.3"/><path d="M609.8 523.3L637.8 495.3" stroke="#111" stroke-width="1.3"/><path d="M708.7 523.3L736.7 495.3" stroke="#111" stroke-width="1.3"/><path d="M832.2 523.3L860.2 495.3" stroke="#111" stroke-width="1.3"/><text transform="translate(535.49 495.50) scale(1.09 1)" font-family="Liberation Sans" font-size="12.2" letter-spacing="0.05" fill="#111" stroke="#111" stroke-width="0.2">4' 11 1/2&quot;</text><path d="M524.4 491.1L531.8 487.5V494.7Z" fill="#111"/><path d="M602.0 491.1L594.6 487.5V494.7Z" fill="#111"/><text transform="translate(660.27 495.50) scale(1.09 1)" font-family="Liberation Sans" font-size="12.2" letter-spacing="0.05" fill="#111" stroke="#111" stroke-width="0.2">4' 0&quot;</text><path d="M649.2 491.1L656.6 487.5V494.7Z" fill="#111"/><path d="M697.9 491.1L690.5 487.5V494.7Z" fill="#111"/><text transform="translate(757.04 495.50) scale(1.09 1)" font-family="Liberation Sans" font-size="12.2" letter-spacing="0.05" fill="#111" stroke="#111" stroke-width="0.2">4' 11 1/2&quot;</text><path d="M745.9 491.1L753.3 487.5V494.7Z" fill="#111"/><path d="M823.6 491.1L816.2 487.5V494.7Z" fill="#111"/><path d="M370.0 519.6H623.5" stroke="#555" stroke-width="2" stroke-dasharray="4.5 3.3"/><path d="M370.0 518.9H371.0" stroke="#555" stroke-width="2" stroke-dasharray="4.5 3.3"/><path d="M371.0 593.3H496.0" stroke="#555" stroke-width="2" stroke-dasharray="4.5 3.3"/><path d="M371.0 813.0H496.0" stroke="#555" stroke-width="2" stroke-dasharray="4.5 3.3"/><path d="M406.2 518.9V813.0" stroke="#111" stroke-width="2"/><path d="M392.2 504.9L420.2 532.9" stroke="#111" stroke-width="1.3"/><path d="M392.2 579.3L420.2 607.3" stroke="#111" stroke-width="1.3"/><path d="M392.2 799.0L420.2 827.0" stroke="#111" stroke-width="1.3"/><text transform="translate(393.40 574.68) rotate(-90) scale(1.09 1)" font-family="Liberation Sans" font-size="12.2" letter-spacing="0.05" fill="#111" stroke="#111" stroke-width="0.2">3' 1/2&quot;</text><path d="M389.0 525.8L385.4 533.2H392.6Z" fill="#111"/><path d="M389.0 585.8L385.4 578.4H392.6Z" fill="#111"/><text transform="translate(393.40 730.56) rotate(-90) scale(1.09 1)" font-family="Liberation Sans" font-size="12.2" letter-spacing="0.05" fill="#111" stroke="#111" stroke-width="0.2">8' 11 1/2&quot;</text><path d="M389.0 664.0L385.4 671.4H392.6Z" fill="#111"/><path d="M389.0 741.7L385.4 734.3H392.6Z" fill="#111"/><path d="M440.0 609.3H496.0" stroke="#555" stroke-width="2" stroke-dasharray="4.5 3.3"/><path d="M440.0 673.0H496.0" stroke="#555" stroke-width="2" stroke-dasharray="4.5 3.3"/><path d="M440.0 736.5H496.0" stroke="#555" stroke-width="2" stroke-dasharray="4.5 3.3"/><path d="M440.0 800.1H496.0" stroke="#555" stroke-width="2" stroke-dasharray="4.5 3.3"/><path d="M456.1 609.3V800.1" stroke="#111" stroke-width="2"/><path d="M442.1 595.3L470.1 623.3" stroke="#111" stroke-width="1.3"/><path d="M442.1 659.0L470.1 687.0" stroke="#111" stroke-width="1.3"/><path d="M442.1 722.5L470.1 750.5" stroke="#111" stroke-width="1.3"/><path d="M442.1 786.1L470.1 814.1" stroke="#111" stroke-width="1.3"/><text transform="translate(442.40 665.33) rotate(-90) scale(1.09 1)" font-family="Liberation Sans" font-size="12.2" letter-spacing="0.05" fill="#111" stroke="#111" stroke-width="0.2">2' 7 1/2&quot;</text><path d="M438.0 605.3L434.4 612.7H441.6Z" fill="#111"/><path d="M438.0 676.4L434.4 669.0H441.6Z" fill="#111"/><text transform="translate(442.40 728.93) rotate(-90) scale(1.09 1)" font-family="Liberation Sans" font-size="12.2" letter-spacing="0.05" fill="#111" stroke="#111" stroke-width="0.2">2' 7 1/2&quot;</text><path d="M438.0 668.9L434.4 676.3H441.6Z" fill="#111"/><path d="M438.0 740.0L434.4 732.6H441.6Z" fill="#111"/><text transform="translate(442.40 799.44) rotate(-90) scale(1.09 1)" font-family="Liberation Sans" font-size="12.2" letter-spacing="0.05" fill="#111" stroke="#111" stroke-width="0.2">2' 7 11/16&quot;</text><path d="M438.0 725.5L434.4 732.9H441.6Z" fill="#111"/><path d="M438.0 810.5L434.4 803.1H441.6Z" fill="#111"/><path d="M846.0 587.1H912.7" stroke="#555" stroke-width="2" stroke-dasharray="4.5 3.3"/><path d="M846.0 697.5H912.7" stroke="#555" stroke-width="2" stroke-dasharray="4.5 3.3"/><path d="M846.0 807.4H912.7" stroke="#555" stroke-width="2" stroke-dasharray="4.5 3.3"/><path d="M886.1 587.1V807.4" stroke="#111" stroke-width="2"/><path d="M872.1 573.1L900.1 601.1" stroke="#111" stroke-width="1.3"/><path d="M872.1 683.5L900.1 711.5" stroke="#111" stroke-width="1.3"/><path d="M872.1 793.4L900.1 821.4" stroke="#111" stroke-width="1.3"/><text transform="translate(874.70 670.20) rotate(-90) scale(1.09 1)" font-family="Liberation Sans" font-size="12.2" letter-spacing="0.05" fill="#111" stroke="#111" stroke-width="0.2">4' 6 1/16&quot;</text><path d="M870.3 602.7L866.7 610.1H873.9Z" fill="#111"/><path d="M870.3 681.3L866.7 673.9H873.9Z" fill="#111"/><text transform="translate(874.70 784.08) rotate(-90) scale(1.09 1)" font-family="Liberation Sans" font-size="12.2" letter-spacing="0.05" fill="#111" stroke="#111" stroke-width="0.2">4' 5 15/16&quot;</text><path d="M870.3 709.1L866.7 716.5H873.9Z" fill="#111"/><path d="M870.3 795.2L866.7 787.8H873.9Z" fill="#111"/><path d="M502.0 815.0V861.0" stroke="#555" stroke-width="2" stroke-dasharray="4.5 3.3"/><path d="M846.2 813.0V861.0" stroke="#555" stroke-width="2" stroke-dasharray="4.5 3.3"/><path d="M502.0 845.6H846.2" stroke="#111" stroke-width="2"/><path d="M488.0 859.6L516.0 831.6" stroke="#111" stroke-width="1.3"/><path d="M832.2 859.6L860.2 831.6" stroke="#111" stroke-width="1.3"/><text transform="translate(635.52 833.00) scale(1.09 1)" font-family="Liberation Sans" font-size="12.2" letter-spacing="0.05" fill="#111" stroke="#111" stroke-width="0.2">13' 11 13/16&quot;</text><path d="M624.4 828.6L631.8 825.0V832.2Z" fill="#111"/><path d="M724.4 828.6L717.0 825.0V832.2Z" fill="#111"/></svg>
<div class="a" style="left:80px;top:512.4px;width:55.4px;height:55.2px;border:1px solid #f2b53a;border-radius:6px;background:linear-gradient(#fffdf3,#fdd978)"></div>
<svg style="left:70px;top:500px" width="250" height="401" viewBox="70 500 250 401"><g stroke="#222" stroke-width="0.9"><rect x="92" y="533" width="30" height="13.5" rx="2" fill="#cfcfcf"/><rect x="86.5" y="535.5" width="9" height="9" rx="1" fill="#e8e8e8"/><rect x="118.5" y="535.5" width="9" height="9" rx="1" fill="#e8e8e8"/><rect x="97" y="535.5" width="20" height="8.5" fill="#e8e8e8"/><path d="M98 546.5V548H102V546.5 M104 546.5V548H108V546.5 M110 546.5V548H114V546.5" fill="none"/></g><circle cx="162.9" cy="539.2" r="19" fill="#dedede" stroke="#bdbdbd" stroke-width="1.5"/><circle cx="162.9" cy="539.2" r="16.5" fill="#d9d9d9" stroke="#f2f2f2" stroke-width="1"/><circle cx="162.9" cy="539.2" r="3" fill="#111"/><circle cx="218.1" cy="539.2" r="19" fill="#d8d8d8" stroke="#333" stroke-width="0.9"/><path d="M207.5 528 L215.5 531.5 L209 536.5 Z" fill="#fff" stroke="#444" stroke-width="0.8"/><circle cx="274.6" cy="539.2" r="19.5" fill="#bfbfbf" stroke="#333" stroke-width="0.9"/><rect x="272" y="531" width="5" height="16" fill="#888" stroke="#333" stroke-width="0.8"/><circle cx="105.5" cy="594.1" r="19" fill="#bcbcbc" stroke="#333" stroke-width="0.9"/><circle cx="105.5" cy="594.1" r="7.5" fill="#f0f0f0"/><path d="M86.5 594.1H98 M113 594.1H124.5 M105.5 575.1V586.6 M105.5 601.6V613.1" stroke="#333" stroke-width="0.9"/><circle cx="162.7" cy="594.1" r="19" fill="#fff" stroke="#333" stroke-width="0.9"/><circle cx="162.7" cy="594.1" r="9" fill="#b8b8b8" stroke="#444" stroke-width="0.9"/><circle cx="162.7" cy="594.1" r="4.5" fill="#111"/><circle cx="218.5" cy="594.1" r="19.5" fill="#fff" stroke="#333" stroke-width="0.9"/><circle cx="218.5" cy="594.1" r="15.5" fill="#a8a8a8" stroke="#e8e4c8" stroke-width="0.8"/><circle cx="218.5" cy="594.1" r="3" fill="#eee" stroke="#333" stroke-width="0.8"/><circle cx="218.5" cy="594.1" r="1.3" fill="#111"/><rect x="255.2" y="585.5" width="40" height="19.8" rx="1.5" fill="#efefef" stroke="#555" stroke-width="0.9"/><rect x="270.5" y="588" width="21.5" height="14.8" rx="1" fill="#efefef" stroke="#444" stroke-width="0.9"/><path d="M107.2 651.7 L126.1 659.5 L115.0 670.6Z" fill="#a8a8a8" stroke="#444" stroke-width="0.6"/><path d="M107.2 651.7 L115.0 670.6 L99.4 670.6Z" fill="#dcdcdc" stroke="#444" stroke-width="0.6"/><path d="M107.2 651.7 L99.4 670.6 L88.3 659.5Z" fill="#a8a8a8" stroke="#444" stroke-width="0.6"/><path d="M107.2 651.7 L88.3 659.5 L88.3 643.9Z" fill="#dcdcdc" stroke="#444" stroke-width="0.6"/><path d="M107.2 651.7 L88.3 643.9 L99.4 632.8Z" fill="#a8a8a8" stroke="#444" stroke-width="0.6"/><path d="M107.2 651.7 L99.4 632.8 L115.0 632.8Z" fill="#dcdcdc" stroke="#444" stroke-width="0.6"/><path d="M107.2 651.7 L115.0 632.8 L126.1 643.9Z" fill="#a8a8a8" stroke="#444" stroke-width="0.6"/><path d="M107.2 651.7 L126.1 643.9 L126.1 659.5Z" fill="#dcdcdc" stroke="#444" stroke-width="0.6"/><polygon points="126.1,659.5 115.0,670.6 99.4,670.6 88.3,659.5 88.3,643.9 99.4,632.8 115.0,632.8 126.1,643.9" fill="none" stroke="#222" stroke-width="1"/><circle cx="107.2" cy="651.7" r="2.2" fill="#fff" stroke="#444" stroke-width="0.7"/><path d="M162.7 651.7 L181.6 659.5 L170.5 670.6Z" fill="#fff" stroke="#444" stroke-width="0.6"/><path d="M162.7 651.7 L170.5 670.6 L154.9 670.6Z" fill="#fff" stroke="#444" stroke-width="0.6"/><path d="M162.7 651.7 L154.9 670.6 L143.8 659.5Z" fill="#fff" stroke="#444" stroke-width="0.6"/><path d="M162.7 651.7 L143.8 659.5 L143.8 643.9Z" fill="#fff" stroke="#444" stroke-width="0.6"/><path d="M162.7 651.7 L143.8 643.9 L154.9 632.8Z" fill="#fff" stroke="#444" stroke-width="0.6"/><path d="M162.7 651.7 L154.9 632.8 L170.5 632.8Z" fill="#fff" stroke="#444" stroke-width="0.6"/><path d="M162.7 651.7 L170.5 632.8 L181.6 643.9Z" fill="#fff" stroke="#444" stroke-width="0.6"/><path d="M162.7 651.7 L181.6 643.9 L181.6 659.5Z" fill="#fff" stroke="#444" stroke-width="0.6"/><polygon points="181.6,659.5 170.5,670.6 154.9,670.6 143.8,659.5 143.8,643.9 154.9,632.8 170.5,632.8 181.6,643.9" fill="none" stroke="#222" stroke-width="1"/><circle cx="162.7" cy="651.7" r="2.2" fill="#fff" stroke="#444" stroke-width="0.7"/><g stroke="#333" stroke-width="0.8" fill="#bdbdbd"><rect x="198.8" y="637" width="2.6" height="28" rx="1"/><rect x="237" y="637" width="2.6" height="28" rx="1"/><rect x="201" y="650.5" width="36" height="2.4"/><rect x="207" y="649" width="8" height="5" rx="1.5"/><rect x="223" y="649" width="8" height="5" rx="1.5"/></g><path d="M255.5 648.5 Q275 637 295 648.5 L290 659 Q275 651 260.5 659 Z" fill="#eee" stroke="#333" stroke-width="0.9"/><path d="M88.5 715 A18.5 18 0 0 1 125.5 715 H119 A12 11.5 0 0 0 95 715 Z" fill="#f0f0f0" stroke="#333" stroke-width="0.9"/><path d="M92.5 704 L98.5 708 M116.5 708 L122 704 M107 697 V703" stroke="#555" stroke-width="0.6"/><rect x="142.5" y="703" width="40.5" height="11" rx="2" fill="#fff" stroke="#333" stroke-width="0.9"/><rect x="145.5" y="705" width="34.5" height="8" fill="#8a8a8a"/><path d="M145.5 707H180 M145.5 709H180 M145.5 711H180" stroke="#bbb" stroke-width="0.5"/><rect x="144" y="701" width="37.5" height="2.5" rx="1" fill="#fff" stroke="#333" stroke-width="0.8"/><rect x="199" y="702" width="39" height="13" fill="#f0f0f0" stroke="#333" stroke-width="0.9"/><rect x="198.5" y="699" width="40" height="4" rx="1.5" fill="#fff" stroke="#333" stroke-width="0.9"/><path d="M209 703 L211 706 L213 703 M223 703 L225 706 L227 703" fill="none" stroke="#555" stroke-width="0.7"/><rect x="255" y="695" width="40" height="24" fill="#fff" stroke="#222" stroke-width="0.9"/><path d="M255 699H295 M255 703H295 M255 707H295 M255 711H295 M255 715H295" stroke="#444" stroke-width="0.8"/><g stroke="#222" stroke-width="0.9" fill="#eaeaea"><rect x="86.5" y="748" width="7" height="31" rx="1.5"/><rect x="95.5" y="742.5" width="7" height="42" rx="1.5"/><rect x="103.5" y="742.5" width="7" height="42" rx="1.5"/><rect x="111.5" y="742.5" width="7" height="42" rx="1.5"/><rect x="120" y="748" width="7" height="31" rx="1.5"/></g><g stroke="#222" stroke-width="0.9" fill="#777"><rect x="158" y="743.5" width="10" height="9" rx="2"/><rect x="158" y="774.5" width="10" height="9" rx="2"/><rect x="142.5" y="759" width="8" height="10" rx="2"/><rect x="175.5" y="759" width="8" height="10" rx="2"/><circle cx="162.9" cy="763.8" r="12.5" fill="#8a8a8a"/></g><path d="M151 760H175 M150.5 764H175.5 M151 768H175" stroke="#555" stroke-width="0.5"/><g stroke="#222" stroke-width="0.8" fill="#777"><rect x="208" y="748" width="8" height="7" rx="2"/><rect x="220" y="748" width="8" height="7" rx="2"/><rect x="208" y="772" width="8" height="7" rx="2"/><rect x="220" y="772" width="8" height="7" rx="2"/><rect x="198.5" y="759.5" width="7" height="8" rx="1.5"/><rect x="232" y="759.5" width="7" height="8" rx="1.5"/><ellipse cx="218.5" cy="763.5" rx="13.5" ry="8" fill="#6b5d50"/></g><circle cx="274.6" cy="763" r="10" fill="#eee" stroke="#333" stroke-width="0.9"/><path d="M265 749 Q274.6 744 284 749 L282 753 Q274.6 749 267 753 Z M258 760 Q258 772 266 778 L269 775 Q262 770 262 761 Z M291 760 Q291 772 283 778 L280 775 Q287 770 287 761 Z" fill="#fff" stroke="#333" stroke-width="0.9"/><rect x="87" y="799" width="40" height="5" rx="1.5" fill="#fff" stroke="#333" stroke-width="0.9"/><rect x="87" y="834.5" width="40" height="5" rx="1.5" fill="#fff" stroke="#333" stroke-width="0.9"/><circle cx="107" cy="819.2" r="19.5" fill="#efefef" stroke="#333" stroke-width="0.9"/><path d="M143 814 Q163 792 182.5 814" fill="none" stroke="#333" stroke-width="0.9"/><path d="M145 811 Q163 796 180.5 811" fill="none" stroke="#777" stroke-width="0.7"/><ellipse cx="162.7" cy="821" rx="18.5" ry="14.5" fill="#f2f2f2" stroke="#333" stroke-width="0.9"/><ellipse cx="162.7" cy="821" rx="14" ry="10.5" fill="#f6f6f6" stroke="#222" stroke-width="2.4" stroke-dasharray="1.6 2.6"/><ellipse cx="162.7" cy="821" rx="11" ry="7.5" fill="none" stroke="#888" stroke-width="0.7" stroke-dasharray="1 1.5"/><circle cx="218.5" cy="819.2" r="20" fill="#f2f2f2" stroke="#333" stroke-width="0.9"/><circle cx="218.5" cy="819.2" r="15.5" fill="none" stroke="#222" stroke-width="4" stroke-dasharray="2.2 3"/><circle cx="218.5" cy="819.2" r="11" fill="none" stroke="#666" stroke-width="1.5" stroke-dasharray="1 4"/><circle cx="218.5" cy="819.2" r="2.6" fill="#111"/><circle cx="264.5" cy="815.5" r="6" fill="#bdbdbd" stroke="#222" stroke-width="1.4" stroke-dasharray="2 1"/><circle cx="285" cy="815.5" r="6" fill="#bdbdbd" stroke="#222" stroke-width="1.4" stroke-dasharray="2 1"/><circle cx="274.6" cy="822.5" r="7" fill="#eaeaea" stroke="#222" stroke-width="1.3" stroke-dasharray="1.5 1.2"/><rect x="89.5" y="852" width="35" height="45" rx="5" fill="#dcdcdc" stroke="#222" stroke-width="0.9"/><rect x="92" y="865" width="30" height="20" fill="#bdbdbd"/><path d="M90 856H124 M90 859H124 M90 862H124 M92 868H122 M92 871H122 M92 874H122 M92 877H122 M92 880H122 M92 886H122 M92 889H122 M92 892H122" stroke="#f4f4f4" stroke-width="0.8"/><rect x="88.5" y="864" width="5" height="19" rx="1" fill="#fff" stroke="#222" stroke-width="0.9"/><rect x="120.5" y="864" width="5" height="19" rx="1" fill="#fff" stroke="#222" stroke-width="0.9"/><rect x="142.5" y="869.5" width="41" height="13" rx="3" fill="#f4f4f4" stroke="#333" stroke-width="0.9"/><path d="M147 870V882 M150 870V882 M153 870V882 M156 870V882 M159 870V882 M162 870V882 M165 870V882 M174 870V882 M177 870V882 M180 870V882" stroke="#bbb" stroke-width="0.6"/><path d="M170 869.5V882.5" stroke="#333" stroke-width="1.2"/><defs><pattern id="hat" width="2.4" height="2.4" patternUnits="userSpaceOnUse" patternTransform="rotate(45)"><rect width="2.4" height="2.4" fill="#fff"/><path d="M0 0V2.4" stroke="#9a9a9a" stroke-width="0.9"/></pattern></defs><rect x="199" y="864.5" width="41" height="22.5" fill="url(#hat)" stroke="#888" stroke-width="0.9"/><path d="M255.5 864.5 H296 A20.5 22 0 0 1 255.5 864.5 Z" fill="url(#hat)" stroke="#888" stroke-width="0.9"/></svg>
<div class="a" style="left:21.5px;top:898.6px;width:8px;height:4px;border-radius:4px 4px 0 0;background:#1062f0"></div>
<svg style="left:0;top:0" width="929" height="901" font-family="Liberation Sans"><text transform="translate(62 32.5) scale(0.93 1)" font-size="21.8" font-weight="bold" fill="#222">smart</text><text transform="translate(117 32.5) scale(1.07 1)" font-size="21.8" font-weight="bold" fill="#8a8a8a">draw</text><text x="208" y="31.3" font-size="13.8" fill="#161616" stroke="#161616" stroke-width="0.18">File</text><text x="253" y="31.3" font-size="13.8" fill="#000" stroke="#161616" stroke-width="0.3">Home</text><text x="312" y="31.3" font-size="13.8" fill="#161616" stroke="#161616" stroke-width="0.18">Design</text><text x="377" y="31.3" font-size="13.8" fill="#161616" stroke="#161616" stroke-width="0.18">Insert</text><text x="437" y="31.3" font-size="13.8" fill="#161616" stroke="#161616" stroke-width="0.18">Page</text><text x="490" y="31.3" font-size="13.8" fill="#161616" stroke="#161616" stroke-width="0.18">Table</text><text x="546" y="31.3" font-size="13.8" fill="#161616" stroke="#161616" stroke-width="0.18">Options</text><text x="617" y="31.3" font-size="13.8" fill="#161616" stroke="#161616" stroke-width="0.18">Support</text><text x="690" y="31.3" font-size="13.8" fill="#161616" stroke="#161616" stroke-width="0.5">Buy</text><text x="51" y="97.5" font-size="12" fill="#161616" stroke="#161616" stroke-width="0.18">Export</text><text x="157" y="72.8" font-size="11.3" fill="#161616" stroke="#161616" stroke-width="0.35">Paste</text><text x="220.8" y="72.8" font-size="11.3" fill="#b4b4b4" stroke="#b4b4b4" stroke-width="0.18">Cut</text><text x="157" y="99.2" font-size="11.3" fill="#b4b4b4" stroke="#b4b4b4" stroke-width="0.18">Copy</text><text x="221" y="99.2" font-size="11.9" fill="#b4b4b4" stroke="#b4b4b4" stroke-width="0.18">Format Painter</text><text x="344" y="72.8" font-size="11.5" fill="#161616" stroke="#161616" stroke-width="0.35">Undo</text><text x="344" y="99.2" font-size="11.3" fill="#b4b4b4" stroke="#b4b4b4" stroke-width="0.18">Redo</text><text x="426.3" y="72.8" font-size="11.8" fill="#b4b4b4" stroke="#b4b4b4" stroke-width="0.18">Styles</text><text x="426.3" y="99.2" font-size="11.7" fill="#b4b4b4" stroke="#b4b4b4" stroke-width="0.18">Themes</text><text x="522.2" y="72.8" font-size="12" fill="#161616" stroke="#161616" stroke-width="0.35">Fill</text><text x="522.2" y="99.2" font-size="11.7" fill="#161616" stroke="#161616" stroke-width="0.35">Line Style</text><text x="627" y="72.8" font-size="11.8" fill="#161616" stroke="#161616" stroke-width="0.35">Effects</text><text x="734.8" y="75.6" font-size="12" fill="#161616" stroke="#161616" stroke-width="0.18">Arial</text><text x="884" y="75.6" font-size="12" fill="#161616" stroke="#161616" stroke-width="0.18">5</text><text x="82.6" y="178" font-size="12.3" fill="#1b1d3c" stroke="#1b1d3c" stroke-width="0.4">Select</text><text x="158" y="177.7" font-size="12" fill="#161616" stroke="#161616" stroke-width="0.18">Wall</text><text x="223.9" y="177.7" font-size="12" fill="#161616" stroke="#161616" stroke-width="0.18">Line</text><text x="287.1" y="177.7" font-size="12" fill="#161616" stroke="#161616" stroke-width="0.18">Text</text><text x="96" y="224.3" font-size="12" fill="#161616" stroke="#161616" stroke-width="0.18">Add Walls</text><text x="96" y="264.3" font-size="12" fill="#161616" stroke="#161616" stroke-width="0.18">Document Setup</text><text x="96" y="304.3" font-size="12" fill="#161616" stroke="#161616" stroke-width="0.18">Adjust Wall</text><text x="96" y="344.3" font-size="12" fill="#161616" stroke="#161616" stroke-width="0.18">Dimensions &amp; Area</text><text x="96" y="384.3" font-size="12" fill="#161616" stroke="#161616" stroke-width="0.18">Recently Used Symbols</text><text x="84" y="433.5" font-size="12" fill="#8d8d8d" stroke="#8d8d8d" stroke-width="0.18">Search for symbols...</text><text x="282" y="433.5" font-size="12" fill="#0f62fe" stroke="#0f62fe" stroke-width="0.18">More</text><text x="109.7" y="491.2" font-size="12" fill="#161616" stroke="#161616" stroke-width="0.18">Landscape Furniture</text><text x="457.9" y="141.5" font-size="12.4" fill="#8d8d8d" stroke="#8d8d8d" stroke-width="0.18">Page 1</text></svg>
</body></html>
